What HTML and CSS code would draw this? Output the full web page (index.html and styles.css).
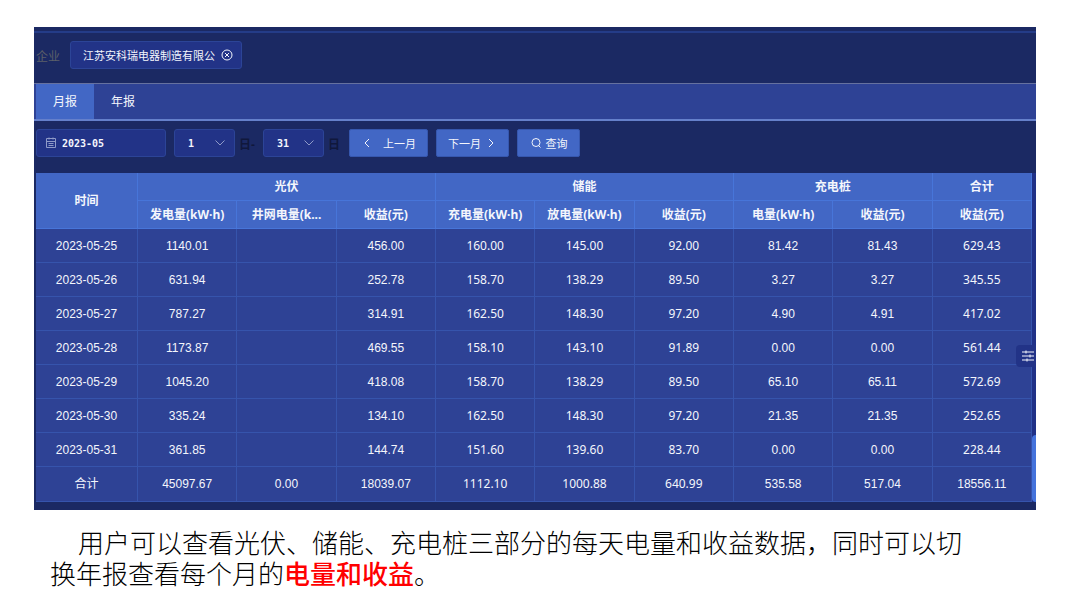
FILE: index.html
```
<!DOCTYPE html>
<html lang="zh-CN">
<head>
  <meta charset="UTF-8">
  <meta name="viewport" content="width=device-width, initial-scale=1.0">
  <title>收益报表</title>
  <link rel="stylesheet" href="styles.css">
</head>
<body>
  <main class="panel">
    <div class="top-strip"></div>

    <div class="company-row">
      <label for="company">企业</label>
      <div class="field company">
        <input type="text" id="company" value="江苏安科瑞电器制造有限公">
        <button type="button" class="clear" aria-label="清除">
          <svg width="12" height="12" viewBox="0 0 12 12"><circle cx="6" cy="6" r="5"/><path d="M4 4l4 4M8 4l-4 4"/></svg>
        </button>
      </div>
    </div>

    <nav class="tabs">
      <button type="button" class="tab active">月报</button>
      <button type="button" class="tab">年报</button>
    </nav>

    <form class="filters">
      <div class="field month">
        <svg width="12" height="12" viewBox="0 0 12 12"><path d="M1.5 1.5h9v9h-9zM1.5 4.5h9M3.5 6.5h5M3.5 8.5h5M4 .5v2M8 .5v2"/></svg>
        <input type="text" value="2023-05" aria-label="月份">
      </div>
      <div class="field day">
        <select id="dayFrom"><option>1</option></select>
        <svg width="12" height="12" viewBox="0 0 12 12"><path d="M1.5 3.5L6 8l4.5-4.5"/></svg>
      </div>
      <label class="unit" for="dayFrom">日-</label>
      <div class="field day">
        <select id="dayTo"><option>31</option></select>
        <svg width="12" height="12" viewBox="0 0 12 12"><path d="M1.5 3.5L6 8l4.5-4.5"/></svg>
      </div>
      <label class="unit last" for="dayTo">日</label>
      <button type="button" class="btn prev">
        <svg width="12" height="12" viewBox="0 0 12 12"><path d="M8 2L4 6l4 4"/></svg>
        上一月
      </button>
      <button type="button" class="btn next">
        下一月
        <svg width="12" height="12" viewBox="0 0 12 12"><path d="M4 2l4 4-4 4"/></svg>
      </button>
      <button type="button" class="btn search">
        <svg width="12" height="12" viewBox="0 0 12 12"><circle cx="6" cy="5.5" r="4"/><path d="M8.5 8.5l2 2"/></svg>
        查询
      </button>
    </form>

    <div class="table-wrap">
      <table>
        <colgroup>
          <col class="col-date">
          <col span="9">
        </colgroup>
        <thead>
          <tr>
            <th rowspan="2">时间</th>
            <th colspan="3">光伏</th>
            <th colspan="3">储能</th>
            <th colspan="2">充电桩</th>
            <th>合计</th>
          </tr>
          <tr>
            <th>发电量(kW·h)</th>
            <th>井网电量(k...</th>
            <th>收益(元)</th>
            <th>充电量(kW·h)</th>
            <th>放电量(kW·h)</th>
            <th>收益(元)</th>
            <th>电量(kW·h)</th>
            <th>收益(元)</th>
            <th>收益(元)</th>
          </tr>
        </thead>
        <tbody>
          <tr><td>2023-05-25</td><td>1140.01</td><td></td><td>456.00</td><td class="alt">160.00</td><td class="alt">145.00</td><td class="alt">92.00</td><td>81.42</td><td>81.43</td><td class="alt">629.43</td></tr>
          <tr><td>2023-05-26</td><td>631.94</td><td></td><td>252.78</td><td class="alt">158.70</td><td class="alt">138.29</td><td class="alt">89.50</td><td>3.27</td><td>3.27</td><td class="alt">345.55</td></tr>
          <tr><td>2023-05-27</td><td>787.27</td><td></td><td>314.91</td><td class="alt">162.50</td><td class="alt">148.30</td><td class="alt">97.20</td><td>4.90</td><td>4.91</td><td class="alt">417.02</td></tr>
          <tr><td>2023-05-28</td><td>1173.87</td><td></td><td>469.55</td><td class="alt">158.10</td><td class="alt">143.10</td><td class="alt">91.89</td><td>0.00</td><td>0.00</td><td class="alt">561.44</td></tr>
          <tr><td>2023-05-29</td><td>1045.20</td><td></td><td>418.08</td><td class="alt">158.70</td><td class="alt">138.29</td><td class="alt">89.50</td><td>65.10</td><td>65.11</td><td class="alt">572.69</td></tr>
          <tr><td>2023-05-30</td><td>335.24</td><td></td><td>134.10</td><td class="alt">162.50</td><td class="alt">148.30</td><td class="alt">97.20</td><td>21.35</td><td>21.35</td><td class="alt">252.65</td></tr>
          <tr><td>2023-05-31</td><td>361.85</td><td></td><td>144.74</td><td class="alt">151.60</td><td class="alt">139.60</td><td class="alt">83.70</td><td>0.00</td><td>0.00</td><td class="alt">228.44</td></tr>
        </tbody>
        <tfoot>
          <tr><td>合计</td><td>45097.67</td><td>0.00</td><td>18039.07</td><td class="alt">1112.10</td><td class="alt">1000.88</td><td class="alt">640.99</td><td>535.58</td><td>517.04</td><td>18556.11</td></tr>
        </tfoot>
      </table>
      <button type="button" class="settings" aria-label="设置">
        <svg width="12" height="12" viewBox="0 0 12 12"><path d="M0 2h12M0 6h12M0 10h12M4 .5v3M8 4.5v3M5 8.5v3"/></svg>
      </button>
      <div class="scroll-thumb"></div>
    </div>
  </main>

  <p class="caption">用户可以查看光伏、储能、充电桩三部分的每天电量和收益数据，同时可以切换年报查看每个月的<strong>电量和收益</strong>。</p>
</body>
</html>
```
FILE: styles.css
```
* {
  box-sizing: border-box;
}

body {
  margin: 0;
  padding: 27px 36px 0 34px;
  background: #fff;
  font-family: "Liberation Sans", "Noto Sans CJK SC", sans-serif;
  font-size: 12px;
  color: #f4f6fc;
}

button, input, select {
  font: inherit;
  color: inherit;
  margin: 0;
  padding: 0;
  border: 0;
  outline: 0;
  background: none;
}

svg {
  flex: none;
  fill: none;
  stroke: currentColor;
}

.panel {
  background: #1b2963;
  padding: 4px 0 8px;
}

.top-strip {
  height: 2px;
  background: #243c88;
}

/* company picker */
.company-row {
  display: flex;
  align-items: center;
  gap: 10px;
  padding: 8px 2px 14px;
}

.company-row label {
  color: #5c6069;
}

.field {
  display: flex;
  align-items: center;
  height: 28px;
  background: #223387;
  border: 1px solid #2c4497;
  border-radius: 3px;
}

.company {
  width: 172px;
  padding: 0 8px 0 12px;
  gap: 4px;
}

.company input {
  flex: 1;
  min-width: 0;
  font-size: 11px;
}

.clear {
  display: flex;
}

/* tabs */
.tabs {
  display: flex;
  height: 38px;
  padding-left: 2px;
  background: #2e4295;
  border-top: 1px solid #66719f;
  border-bottom: 2px solid #6580cb;
}

.tab {
  width: 58px;
  padding-bottom: 2px;
}

.tab.active {
  background: #4267c5;
}

/* filters */
.filters {
  display: flex;
  align-items: center;
  padding: 8px 2px 16px;
}

.month {
  width: 130px;
  padding-left: 8px;
  gap: 5px;
  margin-right: 8px;
  font: bold 10px "DejaVu Sans Mono", monospace;
}

.month input {
  flex: 1;
  min-width: 0;
}

.month svg,
.day svg {
  color: #8f9ac8;
}

.day {
  position: relative;
  width: 61px;
  font: bold 10px "DejaVu Sans Mono", monospace;
}

.day select {
  width: 100%;
  height: 100%;
  padding-left: 13px;
  appearance: none;
}

.day svg {
  position: absolute;
  right: 8px;
  pointer-events: none;
}

.unit {
  width: 28px;
  padding-left: 4px;
  color: #10183c;
  font-weight: bold;
}

.unit.last {
  width: 25px;
}

.btn {
  display: flex;
  align-items: center;
  justify-content: center;
  height: 28px;
  margin-right: 8px;
  background: #4267c5;
  border: 1px solid #3657ae;
  border-radius: 2px;
  font-size: 11px;
}

.prev {
  width: 79px;
  gap: 10px;
}

.next {
  width: 73px;
  gap: 4px;
}

.search {
  width: 63px;
  gap: 4px;
}

/* report table */
.table-wrap {
  position: relative;
  padding: 0 4px 0 2px;
  background: linear-gradient(to left, #203187 4px, #1b2963 4px);
}

table {
  width: 100%;
  table-layout: fixed;
  border-collapse: separate;
  border-spacing: 0;
  text-align: center;
}

.col-date {
  width: 102px;
}

th, td {
  padding: 0;
  border-right: 1px solid #3654ac;
  border-bottom: 1px solid #3654ac;
}

th {
  height: 28px;
  background: #4267c5;
  border-color: #4775d9;
  font-family: "Noto Sans", "Noto Sans CJK SC", sans-serif;
  font-weight: bold;
  line-height: 18px;
  white-space: nowrap;
}

td {
  height: 34px;
  background: #2e4295;
  line-height: 18px;
}

tfoot td {
  height: 35px;
}

td.alt {
  font-family: "Noto Sans", sans-serif;
}

.settings {
  position: absolute;
  right: 0;
  top: 172px;
  display: flex;
  align-items: center;
  justify-content: flex-end;
  width: 20px;
  height: 22px;
  padding-right: 2px;
  background: #223387;
  border-radius: 4px 0 0 4px;
}

.scroll-thumb {
  position: absolute;
  right: 0;
  bottom: 0;
  width: 4px;
  height: 67px;
  background: #4473dc;
  border-radius: 4px 0 0 4px;
}

/* text under the panel */
.caption {
  margin: 19px 68px 0 16px;
  color: #000;
  font-family: "Liberation Serif", "Noto Sans CJK SC", serif;
  font-size: 26px;
  font-weight: 300;
  line-height: 31px;
  text-indent: 28px;
}

.caption strong {
  color: #f00;
  font-weight: 500;
}
```
